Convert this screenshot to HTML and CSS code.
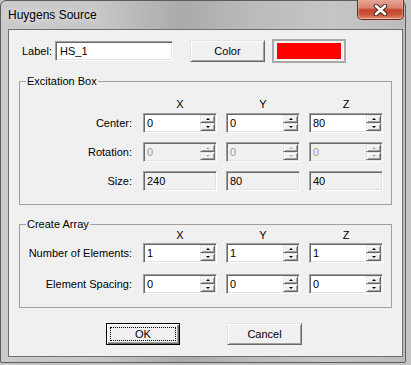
FILE: index.html
```html
<!DOCTYPE html>
<html>
<head>
<meta charset="utf-8">
<link rel="stylesheet" href="styles.css">
</head>
<body>
<div class="window">
  <div class="titlebar">
    <span class="title">Huygens Source</span>
    <div class="close">
      <svg width="15" height="12" viewBox="0 0 15 12">
        <path d="M3 2 L12 10 M12 2 L3 10" stroke="#4a2a24" stroke-width="4.6" stroke-linecap="round" fill="none"/>
        <path d="M3 2 L12 10 M12 2 L3 10" stroke="#ffffff" stroke-width="2.6" stroke-linecap="round" fill="none"/>
      </svg>
    </div>
  </div>
  <div class="client">
    <div class="label-row">
      <span class="lbl">Label:</span>
      <div class="field">HS_1</div>
      <div class="btn color-btn">Color</div>
      <div class="swatch"><div class="swatch-fill"></div></div>
    </div>

    <fieldset class="group g1">
      <legend>Excitation Box</legend>
      <div class="grid hdr-row">
        <span></span><span class="hdr">X</span><span class="hdr">Y</span><span class="hdr">Z</span>
      </div>
      <div class="grid rows">
        <span class="rl">Center:</span>
        <div class="spin"><span class="val">0</span><span class="arrows"><i class="up"></i><i class="dn"></i></span></div>
        <div class="spin"><span class="val">0</span><span class="arrows"><i class="up"></i><i class="dn"></i></span></div>
        <div class="spin"><span class="val">80</span><span class="arrows"><i class="up"></i><i class="dn"></i></span></div>

        <span class="rl">Rotation:</span>
        <div class="spin disabled"><span class="val">0</span><span class="arrows"><i class="up"></i><i class="dn"></i></span></div>
        <div class="spin disabled"><span class="val">0</span><span class="arrows"><i class="up"></i><i class="dn"></i></span></div>
        <div class="spin disabled"><span class="val">0</span><span class="arrows"><i class="up"></i><i class="dn"></i></span></div>

        <span class="rl">Size:</span>
        <div class="ro">240</div>
        <div class="ro">80</div>
        <div class="ro">40</div>
      </div>
    </fieldset>

    <fieldset class="group g2">
      <legend>Create Array</legend>
      <div class="grid hdr-row">
        <span></span><span class="hdr">X</span><span class="hdr">Y</span><span class="hdr">Z</span>
      </div>
      <div class="grid rows">
        <span class="rl">Number of Elements:</span>
        <div class="spin"><span class="val">1</span><span class="arrows"><i class="up"></i><i class="dn"></i></span></div>
        <div class="spin"><span class="val">1</span><span class="arrows"><i class="up"></i><i class="dn"></i></span></div>
        <div class="spin"><span class="val">1</span><span class="arrows"><i class="up"></i><i class="dn"></i></span></div>

        <span class="rl">Element Spacing:</span>
        <div class="spin"><span class="val">0</span><span class="arrows"><i class="up"></i><i class="dn"></i></span></div>
        <div class="spin"><span class="val">0</span><span class="arrows"><i class="up"></i><i class="dn"></i></span></div>
        <div class="spin"><span class="val">0</span><span class="arrows"><i class="up"></i><i class="dn"></i></span></div>
      </div>
    </fieldset>

    <div class="buttons">
      <div class="btn default"><span class="focus">OK</span></div>
      <div class="btn cancel">Cancel</div>
    </div>
  </div>
</div>
</body>
</html>
```
FILE: styles.css
```css
* { box-sizing: border-box; }
html, body { margin: 0; padding: 0; }
body {
  width: 411px;
  height: 365px;
  overflow: hidden;
  background: #c4c4c4;
  font-family: "Liberation Sans", Arial, sans-serif;
  font-size: 11px;
  color: #000;
}

.window {
  width: 406px;
  height: 363px;
  border: 1px solid #5c5c5c;
  border-radius: 6px 6px 2px 2px;
  background: linear-gradient(90deg, #cbcbcb 0%, #c6c6c6 25%, #aaaaaa 45%, #bbbbbb 62%, #c5c5c5 82%, #bcbcbc 100%);
  display: flex;
  flex-direction: column;
  padding: 0 2px 5px 7px;
}

.titlebar {
  height: 28px;
  display: flex;
  align-items: flex-start;
}
.title {
  margin-top: 7px;
  line-height: 14px;
  font-size: 12px;
  text-shadow: 0 0 6px rgba(255,255,255,0.7), 0 0 10px rgba(255,255,255,0.5);
}
.close {
  margin-left: auto;
  margin-top: -1px;
  margin-right: -1px;
  width: 47px;
  height: 20px;
  border: 1px solid #6b2a1e;
  border-top: none;
  border-radius: 0 0 5px 5px;
  background: linear-gradient(180deg, #e6a696 0%, #d98470 40%, #c4452b 52%, #c9553a 75%, #df8a6c 100%);
  box-shadow: inset 0 -1px 0 rgba(255,220,200,0.6), inset 1px 0 0 rgba(255,200,180,0.4), inset -1px 0 0 rgba(255,200,180,0.4);
  display: flex;
  align-items: center;
  justify-content: center;
}
.close svg { display: block; }

.client {
  flex: 1;
  background: #f0f0f0;
  border: 1px solid #6e6e6e;
  display: flex;
  flex-direction: column;
}

.label-row {
  display: flex;
  align-items: center;
  height: 24px;
  margin: 9px 0 0 13px;
}
.lbl { width: 33px; line-height: 14px; }
.field {
  width: 118px;
  height: 20px;
  background: #fff;
  border: 1px solid;
  border-color: #a0a0a0 #ffffff #ffffff #a0a0a0;
  box-shadow: inset 1px 1px 0 #696969, inset -1px -1px 0 #e3e3e3;
  padding-left: 4px;
  line-height: 18px;
}

.btn {
  height: 22px;
  background: #f0f0f0;
  border: 1px solid;
  border-color: #e3e3e3 #696969 #696969 #e3e3e3;
  box-shadow: inset 1px 1px 0 #ffffff, inset -1px -1px 0 #a0a0a0;
  display: flex;
  align-items: center;
  justify-content: center;
  line-height: 14px;
}
.color-btn { width: 75px; margin-left: 17px; }

.swatch {
  width: 74px;
  height: 24px;
  margin-left: 7px;
  border: 2px solid #a9a9a9;
  padding: 2px 3px 2px 3px;
  background: #f4f4f4;
}
.swatch-fill { width: 100%; height: 100%; background: #ff0000; }

.group {
  border: 1px solid #a0a0a0;
  margin: 12px 10px 0 10px;
  padding: 0 0 13px 0;
  min-width: 0;
}
.group legend {
  padding: 0 1px;
  margin-left: 6px;
  line-height: 13px;
  font-size: 11px;
}
.g2 { margin-top: 13px; }

.grid {
  display: grid;
  grid-template-columns: 114px 74px 74px 74px;
  column-gap: 9px;
}
.hdr-row { margin-top: 10px; }
.hdr { text-align: center; line-height: 13px; }
.rows { margin-top: 2px; grid-auto-rows: 20px; row-gap: 9px; }
.g2 .hdr-row { margin-top: -2px; }
.g2 .rows { margin-top: 1px; row-gap: 11px; }

.rl {
  text-align: right;
  padding-right: 2px;
  line-height: 20px;
  white-space: nowrap;
}

.spin, .ro {
  height: 20px;
  border: 1px solid;
  border-color: #a0a0a0 #ffffff #ffffff #a0a0a0;
  box-shadow: inset 1px 1px 0 #696969, inset -1px -1px 0 #e3e3e3;
  padding: 1px;
}
.spin { background: #fff; display: flex; }
.val { flex: 1; padding-left: 2px; line-height: 17px; }
.arrows { width: 15px; display: flex; flex-direction: column; }
.arrows i {
  height: 8px;
  background: #f0f0f0;
  border: 1px solid;
  border-color: #e3e3e3 #696969 #696969 #e3e3e3;
  box-shadow: inset 1px 1px 0 #ffffff, inset -1px -1px 0 #a0a0a0;
  display: flex;
  align-items: center;
  justify-content: center;
}
.arrows i::before {
  content: "";
  width: 0;
  height: 0;
  border-left: 2px solid transparent;
  border-right: 2px solid transparent;
}
.arrows .up::before { border-bottom: 2px solid #000; }
.arrows .dn::before { border-top: 2px solid #000; }

.spin.disabled { background: #f0f0f0; }
.spin.disabled .val { color: #9a9a9a; }
.spin.disabled .arrows .up::before { border-bottom-color: #b0b0b0; }
.spin.disabled .arrows .dn::before { border-top-color: #b0b0b0; }

.ro {
  background: #f0f0f0;
  padding-left: 3px;
  line-height: 17px;
}

.buttons {
  display: flex;
  margin: 15px 0 0 97px;
  gap: 47px;
}
.default {
  width: 74px;
  border: 1px solid #000;
  box-shadow: inset 1px 1px 0 #ffffff, inset -1px -1px 0 #696969, inset -2px -2px 0 #a0a0a0;
  padding: 3px;
}
.focus {
  flex: 1;
  align-self: stretch;
  border: 1px dotted #000;
  display: flex;
  align-items: center;
  justify-content: center;
}
.cancel { width: 75px; }
```
